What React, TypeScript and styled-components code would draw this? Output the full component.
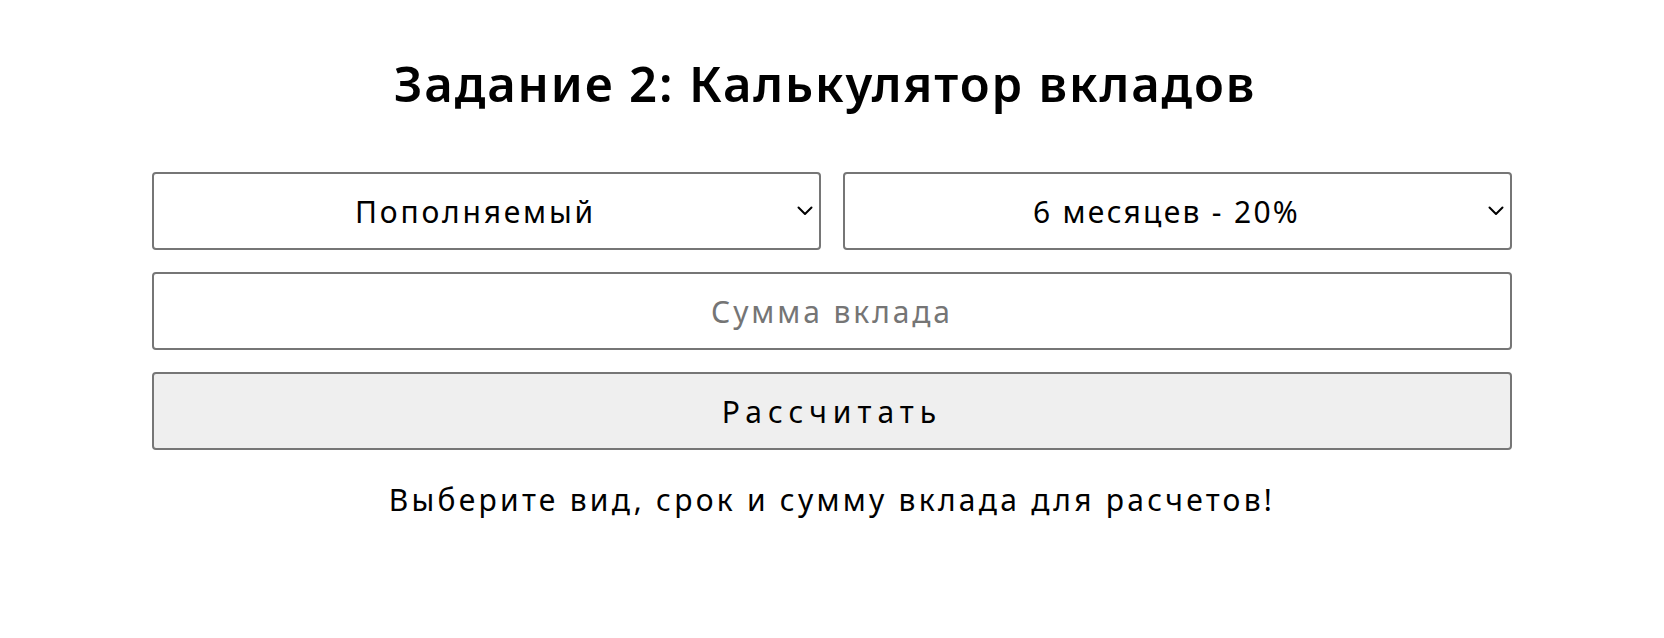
import React from "react";
import styled, { createGlobalStyle } from "styled-components";

const Global = createGlobalStyle`
  html, body { margin: 0; padding: 0; background: #ffffff; }
  body { font-family: "Noto Sans", "DejaVu Sans", sans-serif; color: #000; }
`;

const Page = styled.main`
  width: 1360px;
  margin: 0 auto;
  display: flex;
  flex-direction: column;
  align-items: stretch;
`;

const Title = styled.h1`
  margin: 47px 0 0;
  height: 72px;
  line-height: 72px;
  text-align: center;
  font-size: 49px;
  font-weight: 600;
  letter-spacing: 1.85px;
  padding-right: 14px;
`;

const Form = styled.div`
  margin-top: 53px;
  display: flex;
  flex-direction: column;
  gap: 22px;
`;

const Row = styled.div`
  display: grid;
  grid-template-columns: 1fr 1fr;
  gap: 22px;
`;

const SelectWrap = styled.div`
  position: relative;
`;

const controlBase = `
  box-sizing: border-box;
  width: 100%;
  height: 78px;
  border: 2px solid #767676;
  border-radius: 4px;
  font-family: "Noto Sans", "DejaVu Sans", sans-serif;
  font-size: 30px;
  color: #000;
  text-align: center;
  outline: none;
`;

const Select = styled.select<{ $spacing: number }>`
  ${controlBase}
  letter-spacing: ${(p) => p.$spacing}px;
  appearance: none;
  -webkit-appearance: none;
  background: #fff;
  text-align-last: center;
  padding: 0 30px 0 8px;
`;

const Chevron = styled.svg`
  position: absolute;
  right: 8px;
  top: 50%;
  width: 16px;
  height: 10px;
  margin-top: -5px;
  pointer-events: none;
`;

const Input = styled.input`
  ${controlBase}
  letter-spacing: 2.9px;
  background: #fff;
  padding: 0 10px;
  &::placeholder { color: #757575; }
`;

const Button = styled.button`
  ${controlBase}
  letter-spacing: 6px;
  background: #efefef;
  cursor: pointer;
`;

const Note = styled.p`
  margin: 30px 0 0;
  text-align: center;
  font-size: 30px;
  line-height: 40px;
  letter-spacing: 3.25px;
`;

const Arrow = () => (
  <Chevron viewBox="0 0 16 10" fill="none">
    <path d="M1.5 1.5 L8 8 L14.5 1.5" stroke="#000" strokeWidth="2" strokeLinecap="round" strokeLinejoin="round" />
  </Chevron>
);

export default function App() {
  return (
    <Page>
      <Global />
      <Title>Задание 2: Калькулятор вкладов</Title>
      <Form>
        <Row>
          <SelectWrap>
            <Select $spacing={2.8} defaultValue="replenish">
              <option value="replenish">Пополняемый</option>
              <option value="fixed">Срочный</option>
            </Select>
            <Arrow />
          </SelectWrap>
          <SelectWrap>
            <Select $spacing={2.3} defaultValue="6">
              <option value="6">6 месяцев - 20%</option>
              <option value="12">1 год - 22%</option>
            </Select>
            <Arrow />
          </SelectWrap>
        </Row>
        <Input type="text" inputMode="numeric" placeholder="Сумма вклада" />
        <Button type="button">Рассчитать</Button>
      </Form>
      <Note>Выберите вид, срок и сумму вклада для расчетов!</Note>
    </Page>
  );
}
